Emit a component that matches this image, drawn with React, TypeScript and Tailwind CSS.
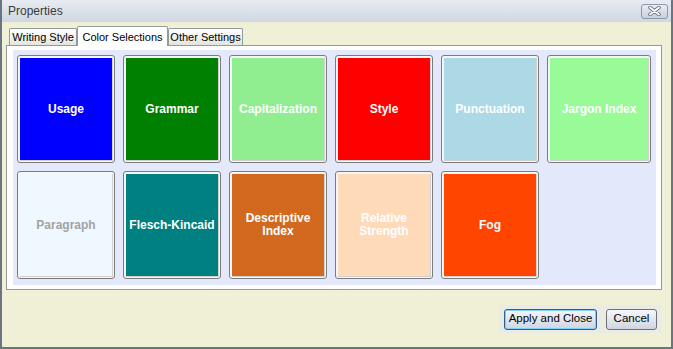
import * as React from "react";

interface Tile {
  label: string[];
  bg: string;
  text: string;
}

const tiles: Tile[] = [
  { label: ["Usage"], bg: "bg-[#0000ff]", text: "text-white" },
  { label: ["Grammar"], bg: "bg-[#008000]", text: "text-white" },
  { label: ["Capitalization"], bg: "bg-[#90ee90]", text: "text-white" },
  { label: ["Style"], bg: "bg-[#ff0000]", text: "text-white" },
  { label: ["Punctuation"], bg: "bg-[#add8e6]", text: "text-white" },
  { label: ["Jargon Index"], bg: "bg-[#98fb98]", text: "text-white" },
  { label: ["Paragraph"], bg: "bg-[#f0f8ff]", text: "text-[#a3a3a3]" },
  { label: ["Flesch-Kincaid"], bg: "bg-[#008080]", text: "text-white" },
  { label: ["Descriptive", "Index"], bg: "bg-[#d2691e]", text: "text-white" },
  { label: ["Relative", "Strength"], bg: "bg-[#ffdab9]", text: "text-white" },
  { label: ["Fog"], bg: "bg-[#ff4500]", text: "text-white" },
];

function ColorTile({ tile }: { tile: Tile }) {
  return (
    <div className="h-[108px] rounded-[3px] border border-[#7c7c7c] bg-[#f6f6f6] p-[2px] pb-[1px] pr-[1px]">
      <div
        className={`flex h-full w-full flex-col items-center justify-center border-b border-r border-[#d0d0d0] ${tile.bg} ${tile.text} text-center text-[12px] font-bold leading-[13px]`}
      >
        {tile.label.map((l) => (
          <span key={l}>{l}</span>
        ))}
      </div>
    </div>
  );
}

function Tab({ label, width, active }: { label: string; width: string; active?: boolean }) {
  if (active) {
    return (
      <div
        className={`relative z-10 -mb-px flex h-[20px] ${width} items-start justify-center rounded-t-[2px] border border-b-0 border-[#919b9c] bg-white pt-[2px] text-[11px] text-black`}
      >
        {label}
      </div>
    );
  }
  return (
    <div
      className={`flex h-[17px] ${width} items-center justify-center rounded-t-[2px] border border-b-0 border-[#919b9c] bg-gradient-to-b from-white to-[#e4e4df] text-[11px] text-black`}
    >
      {label}
    </div>
  );
}

export default function App() {
  return (
    <div
      className="flex h-[349px] w-[673px] flex-col border-b-2 border-l-2 border-r-2 border-[#6a7584] bg-[#f0f0d7]"
      style={{ fontFamily: '"Liberation Sans", Arial, sans-serif' }}
    >
      <div className="flex h-[22px] items-center justify-between bg-gradient-to-b from-[#e8ecf2] to-[#cfd7e2] pl-[6px] pr-[3px]">
        <span className="text-[12px] text-[#3a3a3a]">Properties</span>
        <button className="flex h-[15px] w-[27px] items-center justify-center rounded-[3px] border border-[#8d97a5] bg-gradient-to-b from-[#e9edf3] to-[#c9d1dd]">
          <svg width="13" height="10" viewBox="0 0 13 10">
            <path d="M2 1.5 L11 8.5 M11 1.5 L2 8.5" stroke="#6b7584" strokeWidth="3.6" strokeLinecap="round" />
            <path d="M2 1.5 L11 8.5 M11 1.5 L2 8.5" stroke="#ffffff" strokeWidth="1.8" strokeLinecap="round" />
          </svg>
        </button>
      </div>

      <div className="mt-[4px] flex h-[19px] items-end pl-[7px]">
        <Tab label="Writing Style" width="w-[68px]" />
        <Tab label="Color Selections" width="w-[91px]" active />
        <Tab label="Other Settings" width="w-[75px]" />
      </div>

      <div className="ml-[4px] h-[245px] w-[656px] border border-[#919b9c] bg-white pb-[4px] pl-[6px] pr-[5px] pt-[4px]">
        <div className="h-full w-full bg-[#e3e8fa] pl-[4px] pt-[5px]">
          <div className="grid grid-cols-[98px_98px_98px_98px_98px_104px] gap-x-[8px] gap-y-[8px]">
            {tiles.map((t) => (
              <ColorTile key={t.label.join(" ")} tile={t} />
            ))}
          </div>
        </div>
      </div>

      <div className="mt-[15px] flex justify-end pr-[9px]">
        <div className="flex h-[28px] items-center gap-[9px] bg-[#ebebe6] px-[5px]">
          <button className="flex h-[21px] w-[93px] items-center justify-center rounded-[3px] border border-[#2f5f8a] bg-gradient-to-b from-[#f4f7fb] to-[#cdd6e3] text-[11.5px] text-black shadow-[inset_0_0_0_1px_#7fd0f2]">
            Apply and Close
          </button>
          <button className="flex h-[21px] w-[51px] items-center justify-center rounded-[3px] border border-[#707070] bg-gradient-to-b from-[#f6f7fa] to-[#cfd5e0] text-[11.5px] text-black">
            Cancel
          </button>
        </div>
      </div>
    </div>
  );
}
